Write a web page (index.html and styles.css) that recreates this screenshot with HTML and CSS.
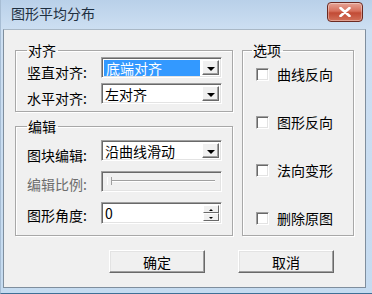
FILE: index.html
```html
<!DOCTYPE html>
<html lang="zh-CN">

<head>
    <meta charset="UTF-8" />
    <title>图形平均分布</title>
    <link rel="stylesheet" href="styles.css">
</head>

<body>
    <div class="window">
        <div class="titlebar">
            <span class="title">图形平均分布</span>
            <button class="close">
                <svg width="12" height="10" viewBox="0 0 12 10">
                    <path d="M1.5 1 L10.5 9 M10.5 1 L1.5 9" stroke="#fff" stroke-width="2.6" stroke-linecap="round" />
                </svg>
            </button>
        </div>

        <div class="client">
            <div class="groups">
                <div class="col-left">
                    <fieldset class="group g-align">
                        <legend>对齐</legend>
                        <div class="row">
                            <label>竖直对齐:</label>
                            <div class="combo">
                                <span class="value"><span class="selected">底端对齐</span></span>
                                <span class="drop"></span>
                            </div>
                        </div>
                        <div class="row">
                            <label>水平对齐:</label>
                            <div class="combo">
                                <span class="value">左对齐</span>
                                <span class="drop"></span>
                            </div>
                        </div>
                    </fieldset>

                    <fieldset class="group g-edit">
                        <legend>编辑</legend>
                        <div class="row">
                            <label>图块编辑:</label>
                            <div class="combo">
                                <span class="value">沿曲线滑动</span>
                                <span class="drop"></span>
                            </div>
                        </div>
                        <div class="row row-slider">
                            <label class="disabled">编辑比例:</label>
                            <div class="slider">
                                <span class="track"></span>
                                <span class="thumb"></span>
                            </div>
                        </div>
                        <div class="row row-spin">
                            <label>图形角度:</label>
                            <div class="spin">
                                <span class="value">0</span>
                                <span class="arrows">
                                    <span class="up"></span>
                                    <span class="down"></span>
                                </span>
                            </div>
                        </div>
                    </fieldset>
                </div>

                <fieldset class="group g-options">
                    <legend>选项</legend>
                    <label class="check"><span class="box"></span>曲线反向</label>
                    <label class="check"><span class="box"></span>图形反向</label>
                    <label class="check"><span class="box"></span>法向变形</label>
                    <label class="check"><span class="box"></span>删除原图</label>
                </fieldset>
            </div>

            <div class="buttons">
                <button class="btn">确定</button>
                <button class="btn">取消</button>
            </div>
        </div>
    </div>
</body>

</html>
```

FILE: styles.css
```css
body {
    margin: 0;
    font-family: "Noto Sans CJK SC", "Noto Sans", sans-serif;
    font-size: 14px;
    color: #000;
    background: #fff;
}

.window {
    width: 372px;
    height: 294px;
    box-sizing: border-box;
    display: flex;
    flex-direction: column;
    padding: 0 6px 5px 2px;
    background: linear-gradient(#b9d0e9, #cddff2 30px, #c5dbf0);
    border-left: 1px solid #a7bdd4;
    border-bottom: 1px solid #3e6f96;
}

.titlebar {
    height: 29px;
    flex: none;
    display: flex;
    align-items: center;
    justify-content: space-between;
    padding-left: 8px;
}

.title {
    font-size: 14px;
    line-height: 16px;
    color: #1e2f40;
    margin-top: -3px;
}

.close {
    width: 36px;
    height: 20px;
    margin-top: -6px;
    margin-right: 3px;
    padding: 0;
    border: 1px solid #6b2a22;
    border-radius: 4px;
    background: linear-gradient(#e6a496, #d7705c 45%, #c24b35 55%, #d2715a);
    box-shadow: inset 0 0 0 1px rgba(255, 255, 255, 0.35);
    display: flex;
    align-items: center;
    justify-content: center;
}

.client {
    flex: 1;
    background: #f0f0f0;
    border: 1px solid #7f8e9d;
    border-top-color: #a9b8c6;
    padding: 13px 10px 0 11px;
}

.groups {
    display: flex;
    gap: 9px;
}

.col-left {
    width: 218px;
    display: flex;
    flex-direction: column;
    gap: 7px;
}

.group {
    margin: 0;
    border: 1px solid #a8a8a8;
    box-shadow: inset 1px 1px 0 #fff, 1px 1px 0 #fff;
    padding: 0 10px 0 11px;
    min-width: 0;
}

.group legend {
    font-size: 14px;
    line-height: 14px;
    padding: 0 2px 0 1px;
    margin-left: 0;
}

.g-align {
    padding-bottom: 7px;
}

.g-edit {
    padding-top: 7px;
    padding-bottom: 11px;
}

.g-options {
    width: 112px;
    box-sizing: border-box;
    padding: 9px 0 0 13px;
    display: flex;
    flex-direction: column;
    gap: 32px;
}

.g-options legend {
    margin-left: -4px;
}

.row {
    display: flex;
    align-items: center;
    justify-content: space-between;
    height: 21px;
}

.row + .row {
    margin-top: 5px;
}

.g-edit .row + .row {
    margin-top: 10px;
}

.g-edit .row-spin {
    margin-top: 11px;
    height: 22px;
}

/* static texts sit a little lower than their controls */
.row label {
    line-height: 16px;
    margin-top: 8px;
}

.row-slider label,
.row-spin label {
    margin-top: 4px;
}

.row label.disabled {
    color: #6d6d6d;
}

.combo,
.slider,
.spin {
    width: 121px;
    height: 21px;
    box-sizing: border-box;
    display: flex;
    border: 1px solid;
    border-color: #a0a0a0 #fff #fff #a0a0a0;
    box-shadow: inset 1px 1px 0 #696969, inset -1px -1px 0 #e3e3e3;
    background: #fff;
    padding: 2px;
}

.combo .value,
.spin .value {
    flex: 1;
    line-height: 16px;
    padding-left: 1px;
}

.selected {
    display: inline-block;
    width: 94px;
    background: #3399ff;
    color: #fff;
    padding-left: 2px;
    margin-left: -1px;
}

.drop {
    width: 17px;
    flex: none;
    background: #f0f0f0;
    border: 1px solid;
    border-color: #fff #696969 #696969 #fff;
    box-shadow: inset -1px -1px 0 #a0a0a0;
    box-sizing: border-box;
    position: relative;
}

.drop::after {
    content: "";
    position: absolute;
    left: 4px;
    top: 6px;
    border: 4px solid transparent;
    border-top: 4px solid #000;
    border-bottom: 0;
}

.slider {
    background: #f0f0f0;
    position: relative;
}

.slider .track {
    position: absolute;
    left: 6px;
    right: 6px;
    top: 8px;
    height: 2px;
    border-top: 1px solid #a0a0a0;
    border-bottom: 1px solid #fff;
    box-sizing: border-box;
}

.slider .thumb {
    position: absolute;
    left: 5px;
    top: 5px;
    width: 3px;
    height: 8px;
    border-right: 1px solid #a0a0a0;
    border-left: 1px solid #fff;
    background: #f0f0f0;
}

.spin {
    height: 22px;
}

.spin .arrows {
    width: 16px;
    flex: none;
    display: flex;
    flex-direction: column;
}

.spin .up,
.spin .down {
    flex: 1;
    background: #f0f0f0;
    border: 1px solid;
    border-color: #fff #696969 #696969 #fff;
    box-sizing: border-box;
    position: relative;
}

.spin .up::after,
.spin .down::after {
    content: "";
    position: absolute;
    left: 5px;
    top: 3px;
    border: 2px solid transparent;
}

.spin .up::after {
    border-bottom: 2px solid #000;
    border-top: 0;
}

.spin .down::after {
    border-top: 2px solid #000;
    border-bottom: 0;
}

.check {
    display: flex;
    align-items: center;
    gap: 8px;
    height: 16px;
    line-height: 16px;
}

.check .box {
    width: 13px;
    height: 13px;
    box-sizing: border-box;
    background: #fff;
    border: 1px solid;
    border-color: #a0a0a0 #fff #fff #a0a0a0;
    box-shadow: inset 1px 1px 0 #696969, inset -1px -1px 0 #e3e3e3;
}

.buttons {
    display: flex;
    justify-content: flex-end;
    gap: 33px;
    padding-right: 21px;
    margin-top: 14px;
}

.btn {
    width: 96px;
    height: 23px;
    padding: 0;
    font-family: inherit;
    font-size: 14px;
    line-height: 16px;
    color: #000;
    background: #f0f0f0;
    border: 1px solid;
    border-color: #fff #696969 #696969 #fff;
    box-shadow: inset -1px -1px 0 #a0a0a0, inset 1px 1px 0 #e3e3e3;
}
```
